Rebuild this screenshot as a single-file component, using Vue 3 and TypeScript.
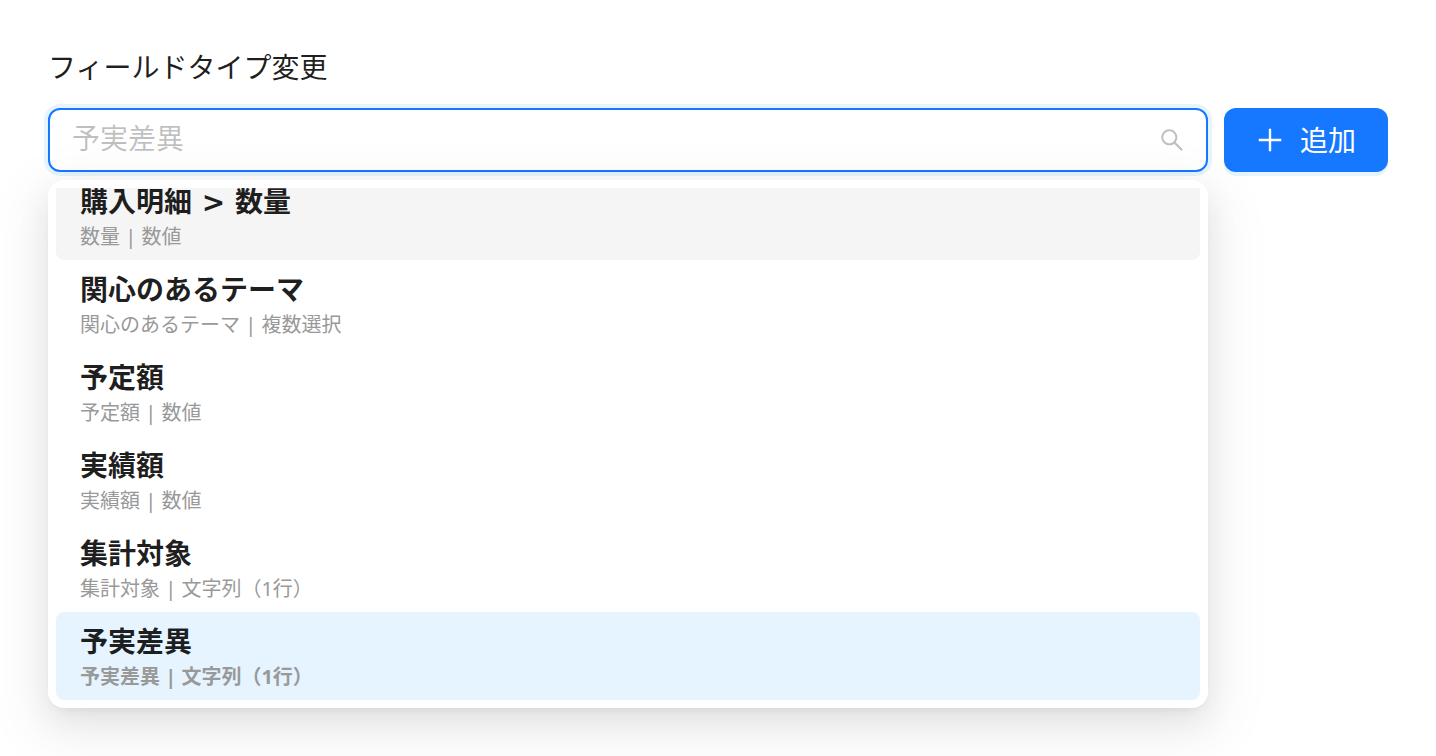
<script setup lang="ts">
import { ref } from 'vue'

interface FieldOption {
  id: number
  title: string
  code: string
  type: string
}

const options: FieldOption[] = [
  { id: 1, title: '購入明細 > 数量', code: '数量', type: '数値' },
  { id: 2, title: '関心のあるテーマ', code: '関心のあるテーマ', type: '複数選択' },
  { id: 3, title: '予定額', code: '予定額', type: '数値' },
  { id: 4, title: '実績額', code: '実績額', type: '数値' },
  { id: 5, title: '集計対象', code: '集計対象', type: '文字列（1行）' },
  { id: 6, title: '予実差異', code: '予実差異', type: '文字列（1行）' },
]

const keyword = ref('')
const activeId = ref(1)
const selectedId = ref(6)
const selectedTitle = () => options.find((o) => o.id === selectedId.value)?.title ?? ''
</script>

<template>
  <main class="page">
    <label class="label" for="field-search">フィールドタイプ変更</label>
    <div class="row">
      <div class="select">
        <div class="selector">
          <input
            id="field-search"
            v-model="keyword"
            class="search"
            type="text"
            role="combobox"
            aria-expanded="true"
            aria-controls="field-list"
            autocomplete="off"
            :placeholder="selectedTitle()"
          />
          <svg class="search-icon" viewBox="64 64 896 896" aria-hidden="true">
            <path
              d="M909.6 854.5L649.9 594.8C690.2 542.7 712 479 712 412c0-80.2-31.3-155.4-87.9-212.1-56.6-56.7-132-87.9-212.1-87.9s-155.5 31.3-212.1 87.9C143.2 256.5 112 331.8 112 412c0 80.1 31.3 155.5 87.9 212.1C256.5 680.8 331.8 712 412 712c67 0 130.6-21.8 182.7-62l259.7 259.6a8.2 8.2 0 0011.6 0l43.6-43.5a8.2 8.2 0 000-11.6zM570.4 570.4C528 612.7 471.8 636 412 636s-116-23.3-158.4-65.6C211.3 528 188 471.8 188 412s23.3-116.1 65.6-158.4C296 211.3 352.2 188 412 188s116.1 23.2 158.4 65.6S636 352.2 636 412s-23.3 116.1-65.6 158.4z"
            />
          </svg>
        </div>
        <div class="dropdown">
          <ul id="field-list" class="list" role="listbox" aria-label="フィールドタイプ変更">
            <li
              v-for="option in options"
              :key="option.id"
              class="option"
              :class="{ active: option.id === activeId, selected: option.id === selectedId }"
              role="option"
              :aria-selected="option.id === selectedId"
              @mouseenter="activeId = option.id"
              @click="selectedId = option.id"
            >
              <span class="title">{{ option.title }}</span>
              <span class="meta">{{ option.code }} | {{ option.type }}</span>
            </li>
          </ul>
        </div>
      </div>
      <button class="add" type="button">
        <svg class="plus" viewBox="64 64 896 896" aria-hidden="true">
          <path d="M482 152h60q8 0 8 8v704q0 8-8 8h-60q-8 0-8-8V160q0-8 8-8z" />
          <path d="M192 474h672q8 0 8 8v60q0 8-8 8H160q-8 0-8-8v-60q0-8 8-8z" />
        </svg>
        <span>追加</span>
      </button>
    </div>
  </main>
</template>

<style>
body {
  margin: 0;
  background: #fff;
}
</style>

<style scoped>
.page {
  box-sizing: border-box;
  min-height: 100vh;
  padding: 44px 48px 48px;
  font-family: "Noto Sans", "Noto Sans CJK JP", sans-serif;
  font-size: 28px;
  line-height: 44px;
  color: rgba(0, 0, 0, 0.88);
}

.label {
  display: block;
  margin-bottom: 18px;
  line-height: 46px;
}

.row {
  display: flex;
  gap: 16px;
}

.select {
  position: relative;
  flex: 1;
  min-width: 0;
}

.selector {
  box-sizing: border-box;
  display: flex;
  align-items: center;
  height: 64px;
  padding: 0 22px;
  border: 2px solid #1677ff;
  border-radius: 12px;
  background: #fff;
  box-shadow: 0 0 0 4px rgba(5, 145, 255, 0.1);
}

.search {
  flex: 1;
  min-width: 0;
  height: 56px;
  padding: 0 0 4px;
  border: 0;
  outline: 0;
  background: transparent;
  font: inherit;
  color: inherit;
}

.search::placeholder {
  color: rgba(0, 0, 0, 0.25);
  opacity: 1;
}

.search-icon {
  width: 24px;
  height: 24px;
  fill: rgba(0, 0, 0, 0.25);
}

.dropdown {
  position: absolute;
  top: 100%;
  left: 0;
  right: 0;
  margin-top: 8px;
  padding: 8px;
  border-radius: 16px;
  background: #fff;
  box-shadow:
    0 12px 32px 0 rgba(0, 0, 0, 0.08),
    0 6px 12px -8px rgba(0, 0, 0, 0.12),
    0 18px 56px 16px rgba(0, 0, 0, 0.05);
}

.list {
  display: flex;
  flex-direction: column;
  justify-content: flex-end;
  height: 512px;
  margin: 0;
  padding: 0;
  overflow: hidden;
  list-style: none;
}

.option {
  box-sizing: border-box;
  display: flex;
  flex: none;
  flex-direction: column;
  height: 88px;
  padding: 10px 24px;
  border-radius: 8px;
  cursor: pointer;
}

.option.active {
  background: #f5f5f5;
}

.option.selected {
  background: #e6f4ff;
}

.title {
  font-family: "DejaVu Sans", "Noto Sans CJK JP", sans-serif;
  font-weight: 700;
  line-height: 42px;
}

.meta {
  font-size: 20px;
  line-height: 26px;
  color: #999;
}

.selected .meta {
  font-weight: 700;
}

.add {
  display: flex;
  align-items: center;
  gap: 16px;
  height: 64px;
  padding: 0 32px;
  border: 0;
  border-radius: 12px;
  background: #1677ff;
  box-shadow: 0 4px 0 rgba(5, 145, 255, 0.1);
  font: inherit;
  color: #fff;
  cursor: pointer;
}

.plus {
  width: 28px;
  height: 28px;
  fill: currentColor;
}
</style>
